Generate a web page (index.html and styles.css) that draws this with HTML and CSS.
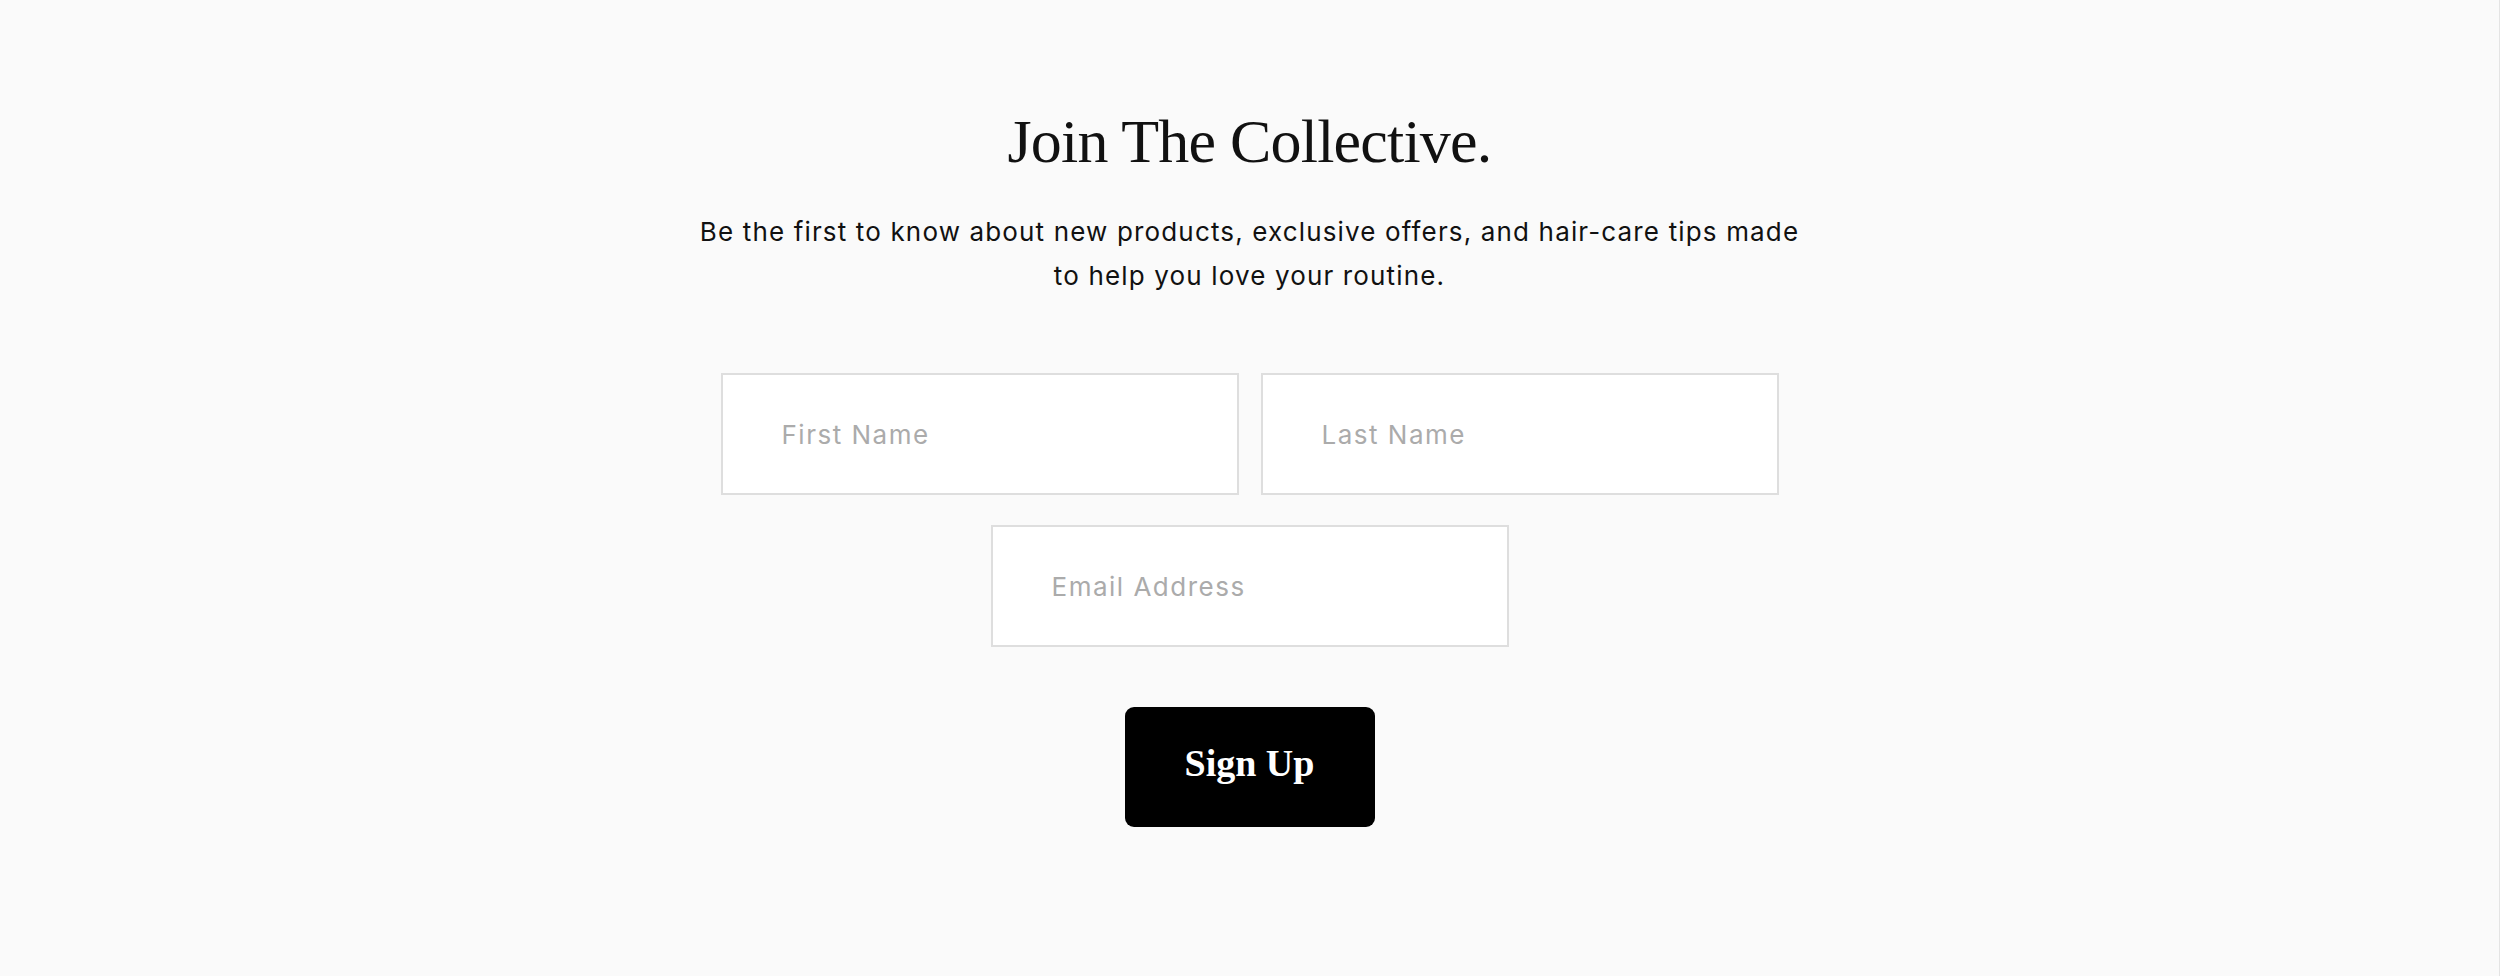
FILE: index.html
```html
<!DOCTYPE html>
<html lang="en">
<head>
<meta charset="utf-8">
<title>Join The Collective</title>
<link rel="stylesheet" href="styles.css">
</head>
<body>
<main class="signup">
  <h2 class="signup-title">Join The Collective.</h2>
  <p class="signup-lede">Be the first to know about new products, exclusive offers, and hair-care tips made to help you love your routine.</p>
  <form class="signup-form">
    <div class="field-row">
      <input class="field" type="text" placeholder="First Name">
      <input class="field" type="text" placeholder="Last Name">
    </div>
    <div class="field-row">
      <input class="field" type="email" placeholder="Email Address">
    </div>
    <button class="signup-button" type="button">Sign Up</button>
  </form>
</main>
</body>
</html>
```

FILE: styles.css
```css
* { box-sizing: border-box; }
html, body { margin: 0; padding: 0; }
body {
  background: #fafafa;
  width: 2500px;
  height: 976px;
  border-right: 1px solid #e4e4e4;
  overflow: hidden;
}
.signup {
  display: flex;
  flex-direction: column;
  align-items: center;
  padding-top: 110px;
}
.signup-title {
  margin: 0;
  font-family: "Liberation Serif", "Times New Roman", serif;
  font-weight: 400;
  font-size: 62px;
  line-height: 62px;
  color: #111;
  letter-spacing: -0.8px;
}
.signup-lede {
  margin: 38px 0 0;
  max-width: 1125px;
  text-align: center;
  font-family: "Inter", "Liberation Sans", sans-serif;
  font-size: 26px;
  line-height: 44px;
  letter-spacing: 1.15px;
  color: #111;
}
.signup-form {
  margin-top: 75px;
  display: flex;
  flex-direction: column;
  align-items: center;
  gap: 30px;
}
.field-row {
  display: flex;
  gap: 22px;
}
.field {
  width: 518px;
  height: 122px;
  border: 2px solid #dedede;
  background: #fff;
  padding: 0 0 0 59px;
  font-family: "Inter", "Liberation Sans", sans-serif;
  font-size: 26px;
  letter-spacing: 1.5px;
  color: #333;
  outline: none;
  border-radius: 0;
}
.field::placeholder { color: #ababab; }
.signup-button {
  margin-top: 30px;
  width: 250px;
  height: 120px;
  border: 0;
  border-radius: 9px;
  background: #000;
  color: #fff;
  padding: 0 0 8px;
  font-family: "Liberation Serif", "Times New Roman", serif;
  font-weight: 700;
  font-size: 38px;
  cursor: pointer;
}
```
